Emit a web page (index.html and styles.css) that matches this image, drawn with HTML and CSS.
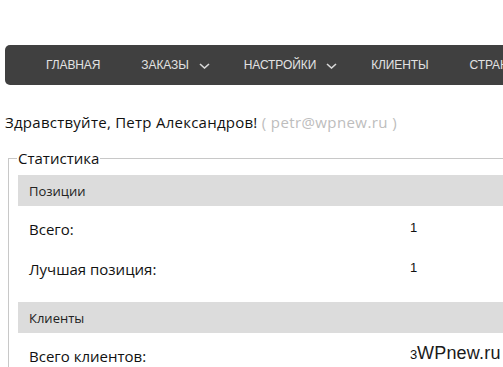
FILE: index.html
```html
<!DOCTYPE html>
<html lang="ru">
<head>
<meta charset="utf-8">
<title>Статистика</title>
<link rel="stylesheet" href="styles.css">
</head>
<body>
<div class="page">
  <nav class="topnav">
    <a class="nav-item" href="#">Главная</a>
    <a class="nav-item has-sub" href="#">Заказы <svg class="chev" width="11" height="6" viewBox="0 0 11 6"><path d="M1 1 L5.5 5 L10 1" fill="none" stroke="#d8d8d8" stroke-width="1.6"/></svg></a>
    <a class="nav-item has-sub" href="#">Настройки <svg class="chev" width="11" height="6" viewBox="0 0 11 6"><path d="M1 1 L5.5 5 L10 1" fill="none" stroke="#d8d8d8" stroke-width="1.6"/></svg></a>
    <a class="nav-item" href="#">Клиенты</a>
    <a class="nav-item" href="#">Страницы</a>
  </nav>

  <p class="greeting">Здравствуйте, Петр Александров! <span class="email">( petr@wpnew.ru )</span></p>

  <fieldset class="stats">
    <legend class="stats-title">Статистика</legend>
    <div class="section-head">Позиции</div>
    <div class="row"><span class="label">Всего:</span><span class="value">1</span></div>
    <div class="row"><span class="label">Лучшая позиция:</span><span class="value">1</span></div>
    <div class="section-head gap">Клиенты</div>
    <div class="row"><span class="label">Всего клиентов:</span><span class="value">3</span></div>
  </fieldset>
</div>
<div class="watermark">WPnew.ru</div>
</body>
</html>
```
FILE: styles.css
```css
html, body {
  margin: 0;
  padding: 0;
  overflow: hidden;
  background: #fff;
}
body {
  font-family: "Open Sans", "Noto Sans", sans-serif;
  color: #111;
}
.page {
  width: 620px;
  padding: 45px 0 0 5px;
}
.topnav {
  display: flex;
  align-items: center;
  height: 40px;
  background: #404040;
  border-radius: 5px;
  padding-left: 21px;
}
.nav-item {
  display: flex;
  align-items: center;
  padding: 0 20px;
  font-family: "Liberation Sans", Arial, sans-serif;
  font-size: 12px;
  letter-spacing: -0.1px;
  text-transform: uppercase;
  color: #e2e2e2;
  text-decoration: none;
  white-space: nowrap;
}
.nav-item + .nav-item {
  margin-left: 1px;
}
.nav-item.has-sub {
  padding-right: 13px;
}
.chev {
  margin-left: 10px;
  margin-top: 1px;
}
.greeting {
  margin: 27px 0 0 0;
  font-size: 15px;
  line-height: 20px;
  letter-spacing: 0.25px;
}
.email {
  color: #bdbdbd;
  letter-spacing: 0.4px;
}
.stats {
  margin: 16px 0 0 3px;
  padding: 0 0 0 9px;
  border: 1px solid #c8c8c8;
  border-right: none;
  border-bottom: none;
}
.stats-title {
  padding: 0 1px;
  margin-left: -1px;
  font-size: 15px;
  line-height: 20px;
}
.section-head {
  height: 31px;
  display: flex;
  align-items: center;
  padding-left: 11px;
  margin-top: 7px;
  background: #dcdcdc;
  font-size: 13px;
  color: #222;
}
.section-head.gap {
  margin-top: 16px;
}
.row {
  display: grid;
  grid-template-columns: 381px auto;
  height: 40px;
  padding-left: 11px;
}
.label {
  font-size: 15px;
  line-height: 20px;
  padding-top: 13px;
}
.value {
  font-family: "Liberation Sans", Arial, sans-serif;
  font-size: 13px;
  line-height: 15px;
  padding-top: 14px;
  color: #111;
}
.watermark {
  position: absolute;
  left: 417px;
  top: 342px;
  font-family: "Liberation Sans", Arial, sans-serif;
  font-size: 18px;
  line-height: 22px;
  letter-spacing: 0.2px;
  color: #1a1a1a;
}
```
